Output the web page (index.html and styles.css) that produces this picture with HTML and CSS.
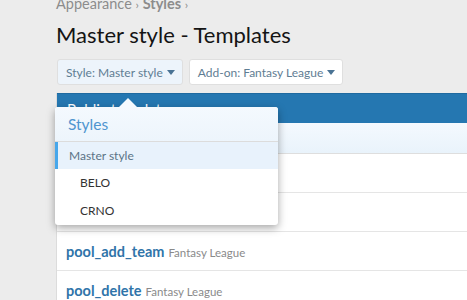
FILE: index.html
```html
<!DOCTYPE html>
<html lang="en">

<head>
    <meta charset="UTF-8">
    <title>Master style - Templates</title>
    <link rel="stylesheet" href="styles.css">
</head>

<body>
    <div class="page">
        <div class="crumbs">Appearance <span class="sep">&rsaquo;</span> <b>Styles</b> <span class="sep">&rsaquo;</span></div>
        <h1 class="title">Master style - Templates</h1>

        <div class="filters">
            <span class="btn btn-active">Style: Master style <i class="caret"></i></span>
            <span class="btn">Add-on: Fantasy League <i class="caret"></i></span>
        </div>

        <div class="block">
            <div class="block-head">Public templates</div>
            <div class="block-filter"></div>
            <div class="row"></div>
            <div class="row"></div>
            <div class="row"><a class="tpl">pool_add_team</a> <span class="addon">Fantasy League</span></div>
            <div class="row"><a class="tpl">pool_delete</a> <span class="addon">Fantasy League</span></div>

            <!-- menu opened from the style button -->
            <div class="menu">
                <div class="menu-head">Styles</div>
                <div class="menu-item menu-item-sel">Master style</div>
                <div class="menu-item menu-item-child">BELO</div>
                <div class="menu-item menu-item-child">CRNO</div>
            </div>
        </div>
    </div>
</body>

</html>
```

FILE: styles.css
```css
body {
    margin: 0;
    background-color: #ececec;
    font-family: Lato, "Noto Sans", sans-serif;
    color: #141414;
    overflow: hidden;
}

.page {
    padding-left: 56px;
}

.crumbs {
    margin-top: -4px;
    font-size: 14.5px;
    line-height: 16px;
    color: #8c8c8c;
}

.crumbs b {
    font-weight: 700;
}

.crumbs .sep {
    font-size: 12px;
}

.title {
    margin: 6px 0 0;
    font-size: 22px;
    font-weight: 400;
    line-height: 32px;
    color: #141414;
}

.filters {
    display: flex;
    gap: 6px;
    margin-top: 8px;
    margin-left: 1px;
}

.btn {
    display: flex;
    align-items: center;
    gap: 4px;
    height: 26px;
    padding: 0 7px 0 8px;
    box-sizing: border-box;
    font-size: 12px;
    color: #5f7d93;
    background-color: #fff;
    border: 1px solid #dfdfdf;
    border-radius: 3px;
}

.btn-active {
    background-color: #edf4fb;
}

.caret {
    width: 0;
    height: 0;
    border-left: 4px solid transparent;
    border-right: 4px solid transparent;
    border-top: 5px solid #4a7394;
}

.block {
    position: relative;
    margin-top: 8px;
    background-color: #fff;
    border-left: 1px solid #dcdcdc;
}

.block-head {
    height: 30px;
    padding-left: 10px;
    font-size: 15px;
    line-height: 30px;
    color: #fff;
    background-color: #2577b1;
    border-top: 1px solid #1f6aa0;
    box-sizing: border-box;
}

.block-filter {
    height: 31px;
    background: linear-gradient(#f4f9fe, #e9f3fb);
    border-bottom: 1px solid #dedede;
    box-sizing: border-box;
}

.row {
    display: flex;
    align-items: baseline;
    gap: 4px;
    height: 39px;
    padding: 11px 0 0 9px;
    box-sizing: border-box;
    border-bottom: 1px solid #e5e5e5;
}

.tpl {
    font-size: 14.5px;
    font-weight: 700;
    color: #2f74a9;
}

.addon {
    font-size: 11.5px;
    color: #8a8a8a;
}

.menu {
    position: absolute;
    left: -2px;
    top: 14px;
    width: 223px;
    background-color: #fff;
    border-radius: 3px;
    box-shadow: 0 3px 9px rgba(0, 0, 0, 0.35);
}

.menu::before {
    content: '';
    position: absolute;
    top: -9px;
    left: 64px;
    border-left: 9px solid transparent;
    border-right: 9px solid transparent;
    border-bottom: 9px solid #f4f9fe;
}

.menu-head {
    height: 34px;
    padding-left: 13px;
    font-size: 15.5px;
    line-height: 34px;
    color: #4f95cf;
    background: linear-gradient(#f4f9fe, #edf5fc);
    border-bottom: 1px solid #dcdcdc;
    border-radius: 3px 3px 0 0;
}

.menu-item {
    height: 28px;
    font-size: 12px;
    line-height: 28px;
    color: #333;
    padding-left: 25px;
}

.menu-item-sel {
    height: 27px;
    line-height: 27px;
    padding-left: 11px;
    color: #5b7286;
    background-color: #e8f2fc;
    border-left: 3px solid #47a7eb;
}

.menu-item-child:last-child {
    border-radius: 0 0 3px 3px;
}
```
